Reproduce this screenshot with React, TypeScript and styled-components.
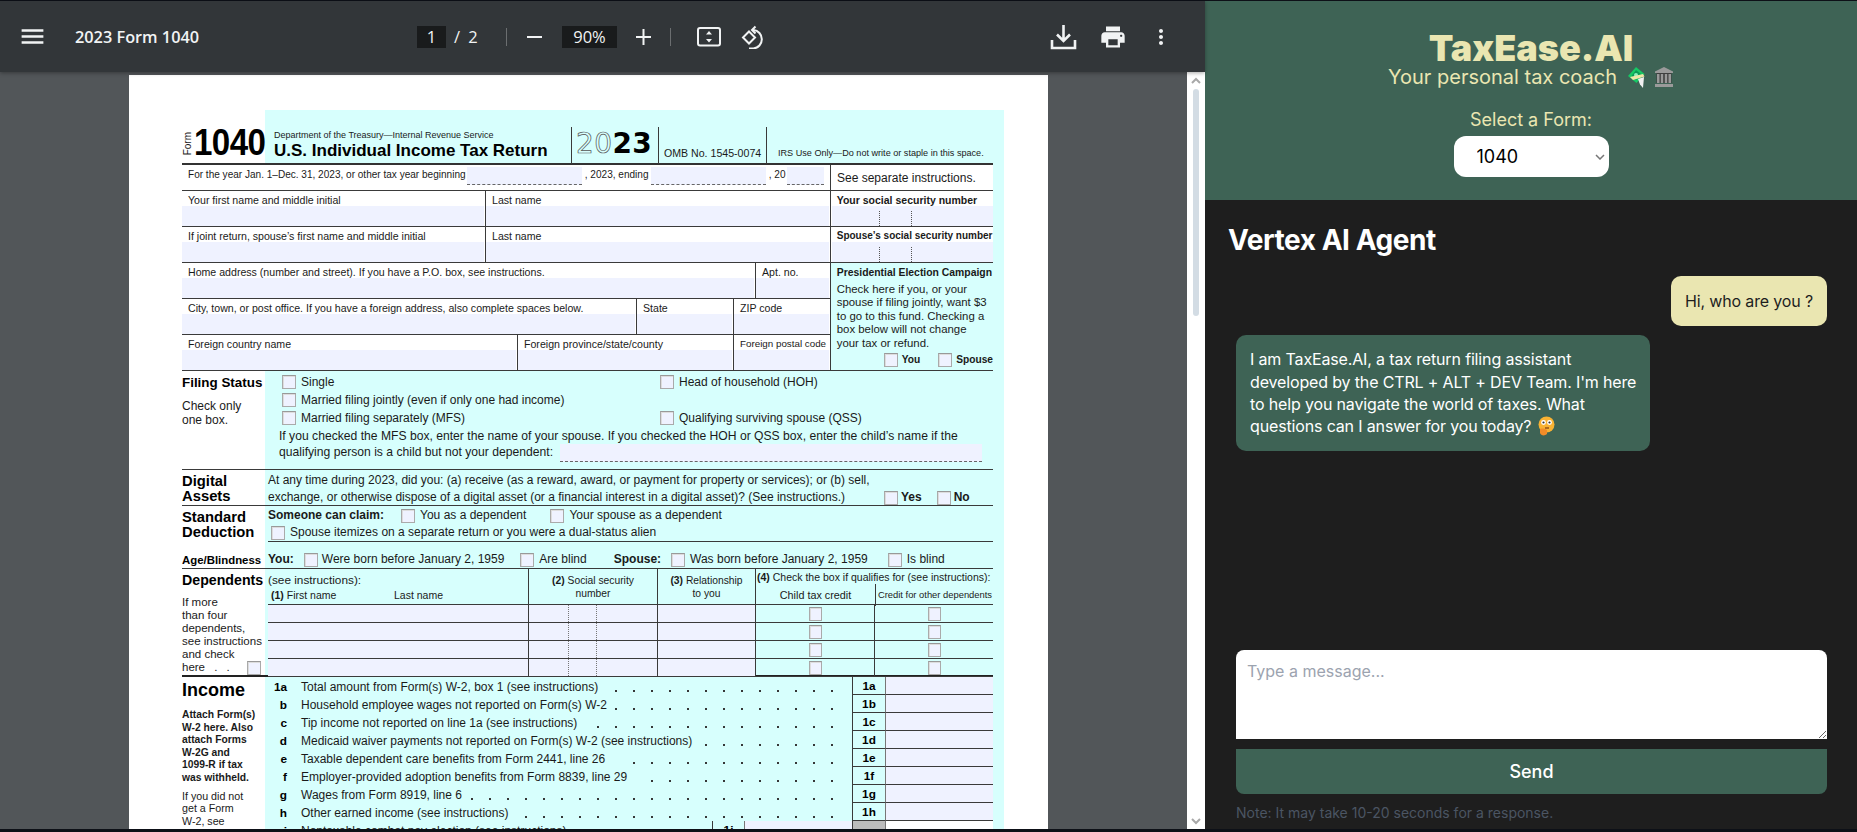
import React from 'react';
import styled, { createGlobalStyle } from 'styled-components';

const GlobalStyle = createGlobalStyle`
  html, body { margin: 0; padding: 0; height: 100%; overflow: hidden; background: #0d1017; }
  #root { height: 100%; }
  * { box-sizing: border-box; }
`;

const LINE = '#3a3a3a';
const FIELD = '#eff2ff';
const CYAN = '#d7fffd';

const Shell = styled.div`
  display: flex;
  width: 1857px;
  height: 832px;
  padding: 1px 0 3px;
  overflow: hidden;
`;

/* ---------- pdf viewer ---------- */

const Viewer = styled.section`
  width: 1205px;
  display: flex;
  flex-direction: column;
  background: #525659;
`;

const Toolbar = styled.header`
  height: 71px;
  flex: none;
  display: grid;
  grid-template-columns: 417px auto 1fr;
  align-items: center;
  background: #323639;
  color: #f1f3f4;
  font-family: "Open Sans", "Noto Sans", sans-serif;
  box-shadow: 0 1px 4px rgba(0, 0, 0, 0.35);
  position: relative;
  z-index: 1;
`;

const ToolLeft = styled.div`
  display: flex;
  align-items: center;
  padding-left: 18px;
  gap: 28px;
`;

const DocTitle = styled.span`
  font-size: 16.3px;
  font-weight: 600;
`;

const ToolCenter = styled.div`
  display: flex;
  align-items: center;
  font-size: 16.5px;
`;

const NumBox = styled.span<{ $w: number; $ml?: number }>`
  width: ${(p) => p.$w}px;
  height: 22px;
  margin-left: ${(p) => p.$ml ?? 0}px;
  background: #191b1c;
  display: flex;
  align-items: center;
  justify-content: center;
`;

const PageOf = styled.span`
  margin: 0 0 0 8px;
  width: 52px;
  word-spacing: 4px;
`;

const Divider = styled.span<{ $mx: string }>`
  width: 1px;
  height: 18px;
  background: #6b6e70;
  margin: ${(p) => p.$mx};
`;

const ToolRight = styled.div`
  display: flex;
  align-items: center;
  justify-content: flex-end;
  padding-right: 32px;
  gap: 22px;
`;

const Glyph = styled.svg<{ $ml?: number }>`
  display: block;
  flex: none;
  margin-left: ${(p) => p.$ml ?? 0}px;
`;

const ViewBody = styled.div`
  flex: 1;
  min-height: 0;
  display: flex;
`;

const PageArea = styled.div`
  flex: 1;
  padding: 3px 0 0 129px;
  overflow: hidden;
`;

const ScrollBar = styled.div`
  width: 18px;
  flex: none;
  background: #fff;
  display: flex;
  flex-direction: column;
  align-items: center;
  padding-top: 5px;
  color: #a8a8a8;
`;

const ScrollThumb = styled.div`
  width: 6px;
  height: 227px;
  margin-top: 5px;
  border-radius: 3px;
  background: #d3dce4;
`;

const ScrollDown = styled.div`
  margin-top: auto;
  margin-bottom: 4px;
`;

/* ---------- the form page ---------- */

const Sheet = styled.div`
  width: 919px;
  height: 1189px;
  padding: 35px 55px 0 53px;
  background: linear-gradient(${CYAN}, ${CYAN}) no-repeat 136px 35px / 739px 100%, #fff;
  font-family: "Liberation Sans", Arial, sans-serif;
  font-size: 10.05px;
  color: #1a1a1a;
  line-height: 1.2;
`;

const Masthead = styled.div`
  height: 55px;
  display: flex;
  border-bottom: 2px solid #333;
`;

const FormTag = styled.div`
  width: 83px;
  display: flex;
  align-items: flex-end;
  padding: 0 0 5px 0;
`;

const FormWord = styled.span`
  writing-mode: vertical-rl;
  transform: rotate(180deg);
  font-size: 10px;
  margin-bottom: 3px;
`;

const FormNum = styled.span`
  font-size: 36px;
  font-weight: 700;
  line-height: 30px;
  letter-spacing: -0.6px;
  color: #000;
  transform: scaleX(0.92);
  transform-origin: left;
`;

const MastTitle = styled.div`
  width: 306px;
  padding: 20px 0 0 9px;
`;

const Dept = styled.div`
  font-size: 9px;
  line-height: 11px;
  white-space: nowrap;
`;

const MainTitle = styled.div`
  font-size: 17px;
  font-weight: 700;
  line-height: 20px;
  color: #000;
  white-space: nowrap;
`;

const MastCell = styled.div<{ $w: number; $rule?: boolean }>`
  width: ${(p) => p.$w}px;
  height: 37px;
  margin-top: 17px;
  border-left: ${(p) => (p.$rule ? `1px solid ${LINE}` : 'none')};
  display: flex;
  align-items: flex-end;
`;

const TaxYear = styled.div`
  font-family: "DejaVu Sans", sans-serif;
  font-size: 28px;
  font-weight: 700;
  line-height: 34px;
  letter-spacing: 0.4px;
  padding: 0 0 3px 4px;
  color: #000;
  white-space: nowrap;
`;

const YearOutline = styled.span`
  color: transparent;
  font-weight: 400;
  -webkit-text-stroke: 0.7px #555;
`;

const OmbText = styled.span`
  padding: 0 0 4px 5px;
  font-size: 10.6px;
`;

const IrsText = styled.span`
  padding: 0 0 5px 11px;
  font-size: 9.1px;
  white-space: nowrap;
`;

const YearRow = styled.div`
  height: 26px;
  display: flex;
  background: #fff;
  border-bottom: 1px solid ${LINE};
`;

const YearLeft = styled.div`
  width: 648px;
  display: flex;
  padding: 2px 0 0 6px;
`;

const InlineText = styled.span<{ $w?: number }>`
  ${(p) => (p.$w ? `width: ${p.$w}px;` : '')}
  padding-top: 2px;
  white-space: nowrap;
`;

const DashedField = styled.span<{ $w: number; $h?: number; $ml?: number }>`
  width: ${(p) => p.$w}px;
  height: ${(p) => p.$h ?? 18}px;
  margin-left: ${(p) => p.$ml ?? 0}px;
  background: ${FIELD};
  border-bottom: 1px dashed #666;
  flex: none;
`;

const SeeSeparate = styled.div`
  flex: 1;
  border-left: 1px solid ${LINE};
  padding: 6px 0 0 6px;
  font-size: 12px;
`;

const IdentBlock = styled.div`
  display: flex;
`;

const IdentLeft = styled.div`
  width: 648px;
  background: #fff;
`;

const IdentRight = styled.div`
  flex: 1;
  background: #fff;
  border-left: 1px solid ${LINE};
`;

const IdentRow = styled.div`
  height: 36px;
  display: flex;
  border-bottom: 1px solid ${LINE};
`;

const Cell = styled.div<{ $w?: number; $rule?: boolean }>`
  ${(p) => (p.$w ? `width: ${p.$w}px; flex: none;` : 'flex: 1;')}
  display: flex;
  flex-direction: column;
  border-left: ${(p) => (p.$rule ? `1px solid ${LINE}` : 'none')};
  min-width: 0;
`;

const CellLabel = styled.div<{ $bold?: boolean; $size?: number }>`
  height: 15px;
  padding: 3px 0 0 6px;
  font-size: ${(p) => p.$size ?? 10.6}px;
  font-weight: ${(p) => (p.$bold ? 700 : 400)};
  white-space: nowrap;
`;

const CellField = styled.div`
  flex: 1;
  background: ${FIELD};
  margin-right: 1px;
`;

const SsnField = styled(CellField)`
  display: flex;
  justify-content: flex-start;
  padding-left: 47px;
  gap: 31.5px;
  margin: 0 0 0 1px;
`;

const SsnTick = styled.span`
  width: 0;
  margin-top: 5px;
  border-left: 1px dotted #555;
`;

const Presidential = styled.div`
  height: 108px;
  padding: 3px 0 0 6px;
  background: ${CYAN};
  border-bottom: 1px solid ${LINE};
  font-size: 11.4px;
  line-height: 13.5px;
  white-space: nowrap;
`;

const PresTitle = styled.div`
  font-size: 10.4px;
  font-weight: 700;
  margin-bottom: 3px;
  white-space: nowrap;
`;

const PresChecks = styled.div`
  display: flex;
  margin: 3px 0 0 47px;
  align-items: center;
`;

const Box = styled.span<{ $ml?: number }>`
  width: 14px;
  height: 14px;
  flex: none;
  margin-left: ${(p) => p.$ml ?? 0}px;
  background: ${FIELD};
  border: 1px solid #aaa;
  border-top-color: #999;
  box-shadow: inset 1px 1px 0 #ddd;
  display: block;
`;

const BoxText = styled.span<{ $bold?: boolean; $ml?: number; $size?: number }>`
  margin-left: ${(p) => p.$ml ?? 5}px;
  font-weight: ${(p) => (p.$bold ? 700 : 400)};
  font-size: ${(p) => p.$size ?? 12}px;
  white-space: nowrap;
`;

const Section = styled.div<{ $h: number; $rule?: string }>`
  height: ${(p) => p.$h}px;
  display: flex;
  border-bottom: ${(p) => p.$rule ?? `1px solid ${LINE}`};
`;

const SideCol = styled.div`
  width: 86px;
  flex: none;
`;

const SideHead = styled.div<{ $size: number; $pt?: number; $lh?: number }>`
  font-size: ${(p) => p.$size}px;
  font-weight: 700;
  color: #000;
  padding-top: ${(p) => p.$pt ?? 0}px;
  line-height: ${(p) => p.$lh ?? 15}px;
  white-space: nowrap;
`;

const SideNote = styled.div<{ $mt?: number; $lh?: number; $bold?: boolean; $size?: number }>`
  margin-top: ${(p) => p.$mt ?? 0}px;
  line-height: ${(p) => p.$lh ?? 13}px;
  font-size: ${(p) => p.$size ?? 11.5}px;
  font-weight: ${(p) => (p.$bold ? 700 : 400)};
  white-space: pre-line;
`;

const MainCol = styled.div`
  flex: 1;
  min-width: 0;
`;

const FilingGrid = styled.div`
  display: grid;
  grid-template-columns: 378px 1fr;
  grid-auto-rows: 18px;
  padding: 2px 0 0 14px;
  align-items: center;
`;

const CheckLine = styled.div<{ $ml?: number; $h?: number }>`
  display: flex;
  align-items: center;
  height: ${(p) => p.$h ?? 18}px;
  margin-left: ${(p) => p.$ml ?? 0}px;
`;

const AgeLine = styled(CheckLine)`
  padding-top: 9px;
`;

const FilingNote = styled.div`
  padding: 1px 0 0 11px;
  font-size: 12.15px;
  line-height: 16px;
  white-space: nowrap;
`;

const FilingLast = styled.div`
  display: flex;
  align-items: flex-start;
`;

const AssetsText = styled.div`
  padding: 2px 0 0 0;
  width: 616px;
  font-size: 12px;
  line-height: 17px;
  white-space: nowrap;
`;

const AssetsRow = styled.div`
  display: flex;
`;

const AssetsChecks = styled.div`
  display: flex;
  align-items: center;
  height: 17px;
  margin-top: 19px;
`;

const StdRow = styled.div<{ $h: number }>`
  height: ${(p) => p.$h}px;
  display: flex;
  flex-direction: column;
  justify-content: center;
  padding-top: 1px;
  border-bottom: 1px solid ${LINE};
`;

const StdSide = styled(SideCol)`
  display: flex;
  flex-direction: column;
  justify-content: space-between;
  padding: 4px 0 1px;
`;

const DepHead = styled.div`
  height: 36px;
  display: grid;
  grid-template-columns: 260px 129px 98px 238px;
  border-bottom: 1px solid ${LINE};
`;

const DepHeadCell = styled.div<{ $rule?: boolean; $center?: boolean }>`
  border-left: ${(p) => (p.$rule ? `1px solid ${LINE}` : 'none')};
  text-align: ${(p) => (p.$center ? 'center' : 'left')};
  font-size: 10.3px;
  line-height: 13px;
  padding-top: ${(p) => (p.$center ? 5 : 0)}px;
`;

const DepSee = styled.div`
  padding-top: 4px;
  font-size: 11.8px;
  line-height: 14px;
`;

const DepNames = styled.div`
  display: flex;
  padding: 2px 0 0 3px;
  font-size: 10.5px;
`;

const DepFirst = styled.span`
  width: 123px;
`;

const DepCreditTop = styled.div`
  padding: 2px 0 0 1px;
  font-size: 10.5px;
  white-space: nowrap;
`;

const DepCreditCols = styled.div`
  display: grid;
  grid-template-columns: 119px 119px;
  height: 20px;
  text-align: center;
  font-size: 9.4px;
  line-height: 22px;
`;

const DepCreditCol = styled.div<{ $rule?: boolean; $size?: number }>`
  border-left: ${(p) => (p.$rule ? `1px solid ${LINE}` : 'none')};
  font-size: ${(p) => p.$size ?? 9.4}px;
  white-space: nowrap;
`;

const DepRow = styled.div`
  height: 18px;
  display: grid;
  grid-template-columns: 260px 129px 98px 119px 119px;
  border-bottom: 1px solid ${LINE};
`;

const DepCell = styled.div<{ $fill?: boolean; $rule?: boolean }>`
  background: ${(p) => (p.$fill ? FIELD : 'transparent')};
  border-left: ${(p) => (p.$rule ? `1px solid ${LINE}` : 'none')};
  display: flex;
  align-items: center;
  justify-content: center;
`;

const DepSsn = styled(DepCell)`
  justify-content: flex-start;
  align-items: stretch;
  padding-left: 39px;
  gap: 27px;
`;

const DepTick = styled.span`
  border-left: 1px dotted #777;
`;

const DepSmallBox = styled(Box)`
  width: 13px;
  height: 14px;
`;

const HereLine = styled.div`
  display: flex;
  align-items: center;
  width: 79px;
  height: 13px;
  font-size: 11.5px;
  word-spacing: 6px;
`;

const HereBox = styled(Box)`
  margin-left: auto;
`;

const IncomeRow = styled.div`
  height: 18px;
  display: flex;
  align-items: center;
  font-size: 12px;
  white-space: nowrap;
`;

const LineNo = styled.span`
  width: 19px;
  flex: none;
  padding-top: 2px;
  text-align: right;
  font-weight: 700;
  font-size: 11.8px;
  color: #000;
`;

const IncomeLabel = styled.span`
  margin-left: 14px;
  padding-top: 2px;
`;

const Leader = styled.span<{ $count: number }>`
  width: ${(p) => p.$count * 18}px;
  height: 100%;
  margin-left: auto;
  margin-right: 11px;
  flex: none;
  background: radial-gradient(circle, #333 0.7px, transparent 1.2px) repeat-x 0 5px / 18px 18px;
`;

const CodeCell = styled.span<{ $grey?: boolean; $w?: number; $push?: boolean }>`
  width: ${(p) => p.$w ?? 33}px;
  height: 18px;
  flex: none;
  margin-left: ${(p) => (p.$push ? 'auto' : '0')};
  padding-top: 2px;
  border-left: 1px solid ${LINE};
  border-bottom: 1px solid ${LINE};
  background: ${(p) => (p.$grey ? '#bcbcbc' : 'transparent')};
  display: flex;
  align-items: center;
  justify-content: center;
  font-weight: 700;
  font-size: 11.8px;
  color: #000;
`;

const AmountCell = styled.span<{ $w?: number; $white?: boolean }>`
  width: ${(p) => p.$w ?? 108}px;
  height: 18px;
  flex: none;
  background: ${(p) => (p.$white ? '#fff' : FIELD)};
  border-bottom: 1px solid ${LINE};
  border-left: 1px solid #777;
`;

/* ---------- chat panel ---------- */

const Panel = styled.aside`
  flex: 1;
  display: flex;
  flex-direction: column;
  background: #1e1e1e;
  font-family: Inter, "Noto Sans", sans-serif;
`;

const PanelHeader = styled.header`
  height: 199px;
  flex: none;
  background: #3e6355;
  color: #eae6b1;
  display: flex;
  flex-direction: column;
  align-items: center;
  padding-top: 29px;
`;

const Brand = styled.h1`
  margin: 0;
  font-size: 36px;
  font-weight: 900;
  line-height: 36px;
`;

const Tagline = styled.div`
  display: flex;
  align-items: center;
  font-size: 20px;
  line-height: 24px;
  margin-top: -1px;
  gap: 10px;
`;

const TagEmoji = styled.span`
  display: flex;
  gap: 9px;
`;

const FormLabel = styled.label`
  margin-top: 18px;
  font-size: 18px;
  line-height: 26px;
`;

const FormSelect = styled.select`
  width: 155px;
  height: 41px;
  margin-top: 3px;
  padding: 0 23px;
  border: 0;
  border-radius: 12px;
  appearance: none;
  background: #fff url("data:image/svg+xml,%3Csvg xmlns='http://www.w3.org/2000/svg' width='10' height='6' viewBox='0 0 10 6'%3E%3Cpath d='M1 1l4 4 4-4' fill='none' stroke='%23777' stroke-width='1.500'/%3E%3C/svg%3E") no-repeat right 4px center;
  color: #000;
  font-family: inherit;
  font-size: 18px;
`;

const ChatBody = styled.div`
  flex: 1;
  display: flex;
  flex-direction: column;
  padding: 0 30px 0 31px;
  min-height: 0;
`;

const AgentTitle = styled.h2`
  margin: 23px 0 0 -8px;
  font-size: 28px;
  font-weight: 700;
  line-height: 34px;
  letter-spacing: -0.45px;
  color: #fff;
`;

const Messages = styled.div`
  flex: 1;
  display: flex;
  flex-direction: column;
  gap: 9px;
  padding-top: 19px;
`;

const Bubble = styled.div<{ $me?: boolean }>`
  align-self: ${(p) => (p.$me ? 'flex-end' : 'flex-start')};
  width: ${(p) => (p.$me ? 'auto' : '414px')};
  padding: 13.6px ${(p) => (p.$me ? 14 : 4)}px 13.6px 14px;
  border-radius: 10px;
  background: ${(p) => (p.$me ? '#eae6b1' : '#3e6355')};
  color: ${(p) => (p.$me ? '#1e1e1e' : '#fff')};
  font-size: 16px;
  line-height: 22.4px;
  letter-spacing: -0.15px;
`;

const EmojiFace = styled.svg`
  vertical-align: -4px;
  margin-left: 2px;
`;

const Composer = styled.textarea`
  display: block;
  width: 100%;
  height: 89px;
  padding: 9px 11px;
  border: 0;
  border-radius: 8px 8px 0 0;
  background: #fff;
  font-family: inherit;
  font-size: 16px;
  line-height: 24px;
  resize: vertical;
  outline: 0;
  &::placeholder { color: #9ca3af; }
`;

const SendButton = styled.button`
  display: block;
  width: 100%;
  height: 45px;
  margin-top: 10px;
  border: 0;
  border-radius: 0 0 8px 8px;
  background: #3e6355;
  color: #fff;
  font-family: inherit;
  font-size: 18px;
  font-weight: 500;
`;

const Note = styled.p`
  margin: 9px 0 6px;
  font-size: 14px;
  line-height: 20px;
  color: #4b5563;
`;

/* ---------- drawings ---------- */

const MenuIcon = () => (
  <Glyph width="29" height="29" viewBox="0 0 24 24" fill="currentColor">
    <path d="M3 18h18v-2H3v2zm0-5h18v-2H3v2zm0-7v2h18V6H3z" />
  </Glyph>
);

const MinusIcon = () => (
  <Glyph width="15" height="16" viewBox="0 0 15 16" stroke="currentColor" strokeWidth="2">
    <path d="M0 8h15" />
  </Glyph>
);

const PlusIcon = () => (
  <Glyph $ml={19} width="15" height="16" viewBox="0 0 15 16" stroke="currentColor" strokeWidth="2">
    <path d="M0 8h15M7.500 0v16" />
  </Glyph>
);

const FitIcon = () => (
  <Glyph $ml={26} width="24" height="20" viewBox="0 0 24 20" fill="none">
    <rect x="1" y="1" width="22" height="17.500" rx="2" stroke="currentColor" strokeWidth="2" />
    <path d="M12 4l3 3.600H9zM12 15.500l3-3.600H9z" fill="currentColor" />
  </Glyph>
);

const RotateIcon = () => (
  <Glyph $ml={20} width="24" height="24" viewBox="0 0 24 24" fill="none" stroke="currentColor" strokeWidth="2">
    <path d="M8 6.500l6 6-6 6-6-6z" />
    <path d="M11 5h1.500a9.300 9.300 0 0 1 0 18.500H8" />
    <path d="M14.500 1.500L11 5l3.500 3.500" />
  </Glyph>
);

const DownloadIcon = () => (
  <Glyph width="27" height="26" viewBox="0 0 27 26" fill="none" stroke="currentColor" strokeWidth="2.600">
    <path d="M13.500 1v15M7 10.500l6.500 6.500 6.500-6.500" />
    <path d="M2 16v8h23v-8" />
  </Glyph>
);

const PrintIcon = () => (
  <Glyph width="28" height="28" viewBox="0 0 24 24" fill="currentColor">
    <path d="M19 8H5c-1.660 0-3 1.340-3 3v6h4v4h12v-4h4v-6c0-1.660-1.340-3-3-3zm-3 11H8v-5h8v5zm3-7c-.550 0-1-.450-1-1s.450-1 1-1 1 .450 1 1-.450 1-1 1zm-1-9H6v4h12V3z" />
  </Glyph>
);

const MoreIcon = () => (
  <Glyph width="24" height="26" viewBox="0 0 24 24" fill="currentColor">
    <path d="M12 8c1.100 0 2-.900 2-2s-.900-2-2-2-2 .900-2 2 .900 2 2 2zm0 2c-1.100 0-2 .900-2 2s.900 2 2 2 2-.900 2-2-.900-2-2-2zm0 6c-1.100 0-2 .900-2 2s.900 2 2 2 2-.900 2-2-.900-2-2-2z" />
  </Glyph>
);

const Chevron = ({ up }: { up?: boolean }) => (
  <Glyph width="10" height="7" viewBox="0 0 10 7" fill="none" stroke="currentColor" strokeWidth="2">
    <path d={up ? 'M1 6l4-4 4 4' : 'M1 1l4 4 4-4'} />
  </Glyph>
);

const MoneyWings = () => (
  <Glyph width="18" height="21" viewBox="0 0 18 21">
    <path d="M9 0l8.500 7-8 9L1 9z" fill="#16c964" />
    <path d="M9 3l5 4-5 6-4.500-4z" fill="#0a9b55" />
    <circle cx="9" cy="8" r="2" fill="#8af2bd" />
    <path d="M3 10l13-3 1.500 2.500L6 13z" fill="#ece6a6" />
    <path d="M11 12l6-2-1 11-3-3.500z" fill="#f0f0f0" />
  </Glyph>
);

const BankIcon = () => (
  <Glyph width="20" height="20" viewBox="0 0 20 20" fill="#9a9a9a">
    <path d="M10 0l9 4.500V6H1V4.500z" />
    <path d="M2.500 6h15v10h-15z" fill="#3f3f3f" />
    <path d="M3 7h2.500v9H3zM6.800 7h2.400v9H6.800zM10.800 7h2.400v9h-2.400zM14.500 7H17v9h-2.500z" />
    <path d="M1 17h18v3H1z" />
  </Glyph>
);

const ThinkFace = () => (
  <EmojiFace width="17" height="20" viewBox="0 0 17 20">
    <circle cx="8.500" cy="8.500" r="8" fill="#f9b233" />
    <circle cx="5.500" cy="6.500" r="2.400" fill="#fff" />
    <circle cx="11.500" cy="6.500" r="2.400" fill="#fff" />
    <circle cx="5.500" cy="6.500" r="1.100" fill="#333" />
    <circle cx="11.500" cy="6.500" r="1.100" fill="#333" />
    <path d="M7 12h4" stroke="#7a3b10" strokeWidth="1.200" />
    <path d="M2 13c2-1 6 0 7 1v4c-2 2-6 2-7-1z" fill="#f28c28" />
  </EmojiFace>
);

/* ---------- data ---------- */

const incomeLines = [
  { no: '1a', code: '1a', text: 'Total amount from Form(s) W-2, box 1 (see instructions)', dots: 13 },
  { no: 'b', code: '1b', text: 'Household employee wages not reported on Form(s) W-2', dots: 13 },
  { no: 'c', code: '1c', text: 'Tip income not reported on line 1a (see instructions)', dots: 14 },
  { no: 'd', code: '1d', text: 'Medicaid waiver payments not reported on Form(s) W-2 (see instructions)', dots: 8 },
  { no: 'e', code: '1e', text: 'Taxable dependent care benefits from Form 2441, line 26', dots: 12 },
  { no: 'f', code: '1f', text: 'Employer-provided adoption benefits from Form 8839, line 29', dots: 11 },
  { no: 'g', code: '1g', text: 'Wages from Form 8919, line 6', dots: 21 },
  { no: 'h', code: '1h', text: 'Other earned income (see instructions)', dots: 18 },
];

const FormPage = () => (
  <Sheet>
    <Masthead>
      <FormTag>
        <FormWord>Form</FormWord>
        <FormNum>1040</FormNum>
      </FormTag>
      <MastTitle>
        <Dept>Department of the Treasury—Internal Revenue Service</Dept>
        <MainTitle>U.S. Individual Income Tax Return</MainTitle>
      </MastTitle>
      <MastCell $w={87} $rule>
        <TaxYear><YearOutline>20</YearOutline>23</TaxYear>
      </MastCell>
      <MastCell $w={108} $rule>
        <OmbText>OMB No. 1545-0074</OmbText>
      </MastCell>
      <MastCell $w={227} $rule>
        <IrsText>IRS Use Only—Do not write or staple in this space.</IrsText>
      </MastCell>
    </Masthead>

    <YearRow>
      <YearLeft>
        <InlineText $w={279}>For the year Jan. 1–Dec. 31, 2023, or other tax year beginning</InlineText>
        <DashedField $w={115} />
        <InlineText $w={69}>&nbsp;, 2023, ending</InlineText>
        <DashedField $w={115} />
        <InlineText $w={21}>&nbsp;, 20</InlineText>
        <DashedField $w={37} />
      </YearLeft>
      <SeeSeparate>See separate instructions.</SeeSeparate>
    </YearRow>

    <IdentBlock>
      <IdentLeft>
        <IdentRow>
          <Cell $w={303}><CellLabel>Your first name and middle initial</CellLabel><CellField /></Cell>
          <Cell $rule><CellLabel>Last name</CellLabel><CellField /></Cell>
        </IdentRow>
        <IdentRow>
          <Cell $w={303}><CellLabel>If joint return, spouse’s first name and middle initial</CellLabel><CellField /></Cell>
          <Cell $rule><CellLabel>Last name</CellLabel><CellField /></Cell>
        </IdentRow>
        <IdentRow>
          <Cell $w={573}><CellLabel>Home address (number and street). If you have a P.O. box, see instructions.</CellLabel><CellField /></Cell>
          <Cell $rule><CellLabel>Apt. no.</CellLabel><CellField /></Cell>
        </IdentRow>
        <IdentRow>
          <Cell $w={454}><CellLabel>City, town, or post office. If you have a foreign address, also complete spaces below.</CellLabel><CellField /></Cell>
          <Cell $w={97} $rule><CellLabel>State</CellLabel><CellField /></Cell>
          <Cell $rule><CellLabel>ZIP code</CellLabel><CellField /></Cell>
        </IdentRow>
        <IdentRow>
          <Cell $w={335}><CellLabel>Foreign country name</CellLabel><CellField /></Cell>
          <Cell $w={216} $rule><CellLabel>Foreign province/state/county</CellLabel><CellField /></Cell>
          <Cell $rule><CellLabel $size={9.8}>Foreign postal code</CellLabel><CellField /></Cell>
        </IdentRow>
      </IdentLeft>
      <IdentRight>
        <IdentRow>
          <Cell>
            <CellLabel $bold $size={10.5}>Your social security number</CellLabel>
            <SsnField><SsnTick /><SsnTick /></SsnField>
          </Cell>
        </IdentRow>
        <IdentRow>
          <Cell>
            <CellLabel $bold $size={10}>Spouse’s social security number</CellLabel>
            <SsnField><SsnTick /><SsnTick /></SsnField>
          </Cell>
        </IdentRow>
        <Presidential>
          <PresTitle>Presidential Election Campaign</PresTitle>
          Check here if you, or your<br />
          spouse if filing jointly, want $3<br />
          to go to this fund. Checking a<br />
          box below will not change<br />
          your tax or refund.
          <PresChecks>
            <Box /><BoxText $bold $ml={4} $size={10.2}>You</BoxText>
            <Box $ml={18} /><BoxText $bold $ml={4} $size={10.2}>Spouse</BoxText>
          </PresChecks>
        </Presidential>
      </IdentRight>
    </IdentBlock>

    <Section $h={99}>
      <SideCol>
        <SideHead $size={13.4} $pt={4}>Filing Status</SideHead>
        <SideNote $mt={9} $lh={14} $size={12}>{'Check only\none box.'}</SideNote>
      </SideCol>
      <MainCol>
        <FilingGrid>
          <CheckLine><Box /><BoxText>Single</BoxText></CheckLine>
          <CheckLine><Box /><BoxText>Head of household (HOH)</BoxText></CheckLine>
          <CheckLine><Box /><BoxText>Married filing jointly (even if only one had income)</BoxText></CheckLine>
          <span />
          <CheckLine><Box /><BoxText>Married filing separately (MFS)</BoxText></CheckLine>
          <CheckLine><Box /><BoxText>Qualifying surviving spouse (QSS)</BoxText></CheckLine>
        </FilingGrid>
        <FilingNote>
          If you checked the MFS box, enter the name of your spouse. If you checked the HOH or QSS box, enter the child’s name if the
          <FilingLast>
            qualifying person is a child but not your dependent:
            <DashedField $w={422} $ml={7} />
          </FilingLast>
        </FilingNote>
      </MainCol>
    </Section>

    <Section $h={36}>
      <SideCol>
        <SideHead $size={14.8} $lh={15} $pt={4}>Digital<br />Assets</SideHead>
      </SideCol>
      <MainCol>
        <AssetsRow>
          <AssetsText>
            At any time during 2023, did you: (a) receive (as a reward, award, or payment for property or services); or (b) sell,<br />
            exchange, or otherwise dispose of a digital asset (or a financial interest in a digital asset)? (See instructions.)
          </AssetsText>
          <AssetsChecks>
            <Box /><BoxText $bold $ml={3}>Yes</BoxText>
            <Box $ml={15} /><BoxText $bold $ml={3}>No</BoxText>
          </AssetsChecks>
        </AssetsRow>
      </MainCol>
    </Section>

    <Section $h={63}>
      <StdSide>
        <SideHead $size={14.8} $lh={15}>Standard<br />Deduction</SideHead>
        <SideHead $size={11.4} $lh={14}>Age/Blindness</SideHead>
      </StdSide>
      <MainCol>
        <StdRow $h={36}>
          <CheckLine $h={18}>
            <BoxText $bold $ml={0}>Someone can claim:</BoxText>
            <Box $ml={17} /><BoxText>You as a dependent</BoxText>
            <Box $ml={24} /><BoxText>Your spouse as a dependent</BoxText>
          </CheckLine>
          <CheckLine $h={18} $ml={3}>
            <Box /><BoxText>Spouse itemizes on a separate return or you were a dual-status alien</BoxText>
          </CheckLine>
        </StdRow>
        <AgeLine $h={26}>
          <BoxText $bold $ml={0}>You:</BoxText>
          <Box $ml={10} /><BoxText $ml={4}>Were born before January 2, 1959</BoxText>
          <Box $ml={16} /><BoxText>Are blind</BoxText>
          <BoxText $bold $ml={27}>Spouse:</BoxText>
          <Box $ml={10} /><BoxText>Was born before January 2, 1959</BoxText>
          <Box $ml={20} /><BoxText>Is blind</BoxText>
        </AgeLine>
      </MainCol>
    </Section>

    <Section $h={108} $rule="2px solid #222">
      <SideCol>
        <SideHead $size={14.2} $pt={4}>Dependents</SideHead>
        <SideNote $mt={8}>{'If more\nthan four\ndependents,\nsee instructions\nand check'}</SideNote>
        <HereLine>here . .<HereBox /></HereLine>
      </SideCol>
      <MainCol>
        <DepHead>
          <DepHeadCell>
            <DepSee>(see instructions):</DepSee>
            <DepNames>
              <DepFirst><b>(1)</b> First name</DepFirst>
              <span>Last name</span>
            </DepNames>
          </DepHeadCell>
          <DepHeadCell $rule $center><b>(2)</b> Social security<br />number</DepHeadCell>
          <DepHeadCell $rule $center><b>(3)</b> Relationship<br />to you</DepHeadCell>
          <DepHeadCell $rule>
            <DepCreditTop><b>(4)</b> Check the box if qualifies for (see instructions):</DepCreditTop>
            <DepCreditCols>
              <DepCreditCol $size={10.8}>Child tax credit</DepCreditCol>
              <DepCreditCol $rule>Credit for other dependents</DepCreditCol>
            </DepCreditCols>
          </DepHeadCell>
        </DepHead>
        {[0, 1, 2, 3].map((i) => (
          <DepRow key={i}>
            <DepCell $fill />
            <DepSsn $fill $rule><DepTick /><DepTick /></DepSsn>
            <DepCell $fill $rule />
            <DepCell $rule><DepSmallBox /></DepCell>
            <DepCell $rule><DepSmallBox /></DepCell>
          </DepRow>
        ))}
      </MainCol>
    </Section>

    <Section $h={200} $rule="none">
      <SideCol>
        <SideHead $size={18} $pt={3} $lh={20}>Income</SideHead>
        <SideNote $mt={9} $lh={12.6} $bold $size={10.3}>
          {'Attach Form(s)\nW-2 here. Also\nattach Forms\nW-2G and\n1099-R if tax\nwas withheld.'}
        </SideNote>
        <SideNote $mt={5} $lh={12.6} $size={10.7}>{'If you did not\nget a Form\nW-2, see\ninstructions.'}</SideNote>
      </SideCol>
      <MainCol>
        {incomeLines.map((line) => (
          <IncomeRow key={line.code}>
            <LineNo>{line.no}</LineNo>
            <IncomeLabel>{line.text}</IncomeLabel>
            <Leader $count={line.dots} />
            <CodeCell>{line.code}</CodeCell>
            <AmountCell />
          </IncomeRow>
        ))}
        <IncomeRow>
          <LineNo>i</LineNo>
          <IncomeLabel>Nontaxable combat pay election (see instructions)</IncomeLabel>
          <CodeCell $w={32} $push>1i</CodeCell>
          <AmountCell />
          <CodeCell $grey />
          <AmountCell $white />
        </IncomeRow>
      </MainCol>
    </Section>
  </Sheet>
);

export default function App() {
  return (
    <>
      <GlobalStyle />
      <Shell>
        <Viewer>
          <Toolbar>
            <ToolLeft>
              <MenuIcon />
              <DocTitle>2023 Form 1040</DocTitle>
            </ToolLeft>
            <ToolCenter>
              <NumBox $w={29}>1</NumBox>
              <PageOf>/ 2</PageOf>
              <Divider $mx="0 20px 0 0" />
              <MinusIcon />
              <NumBox $w={55} $ml={20}>90%</NumBox>
              <PlusIcon />
              <Divider $mx="0 0 0 19px" />
              <FitIcon />
              <RotateIcon />
            </ToolCenter>
            <ToolRight>
              <DownloadIcon />
              <PrintIcon />
              <MoreIcon />
            </ToolRight>
          </Toolbar>
          <ViewBody>
            <PageArea>
              <FormPage />
            </PageArea>
            <ScrollBar>
              <Chevron up />
              <ScrollThumb />
              <ScrollDown><Chevron /></ScrollDown>
            </ScrollBar>
          </ViewBody>
        </Viewer>
        <Panel>
          <PanelHeader>
            <Brand>TaxEase.AI</Brand>
            <Tagline>Your personal tax coach <TagEmoji><MoneyWings /><BankIcon /></TagEmoji></Tagline>
            <FormLabel htmlFor="form-select">Select a Form:</FormLabel>
            <FormSelect id="form-select" defaultValue="1040">
              <option value="1040">1040</option>
            </FormSelect>
          </PanelHeader>
          <ChatBody>
            <AgentTitle>Vertex AI Agent</AgentTitle>
            <Messages>
              <Bubble $me>Hi, who are you ?</Bubble>
              <Bubble>
                I am TaxEase.AI, a tax return filing assistant developed by the CTRL + ALT + DEV Team. I'm here to help you navigate the world of taxes. What questions can I answer for you today? <ThinkFace />
              </Bubble>
            </Messages>
            <Composer placeholder="Type a message..." />
            <SendButton>Send</SendButton>
            <Note>Note: It may take 10-20 seconds for a response.</Note>
          </ChatBody>
        </Panel>
      </Shell>
    </>
  );
}
